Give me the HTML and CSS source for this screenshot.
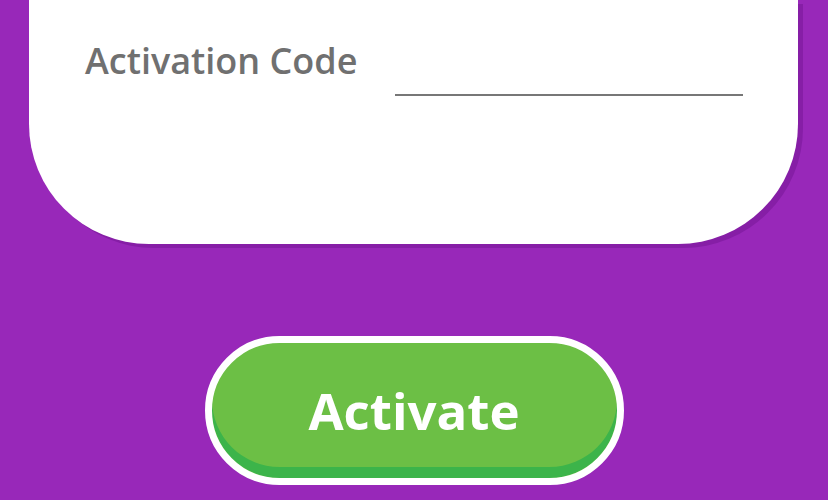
FILE: index.html
```html
<!DOCTYPE html>
<html lang="en">
  <head>
    <meta charset="UTF-8" />
    <meta name="viewport" content="width=device-width, initial-scale=1.0" />
    <title>Activate</title>
    <link rel="stylesheet" href="styles.css">
  </head>
  <body>
    <div class="card">
      <div class="field-row">
        <label for="code" class="field-label">Activation Code</label>
        <input type="text" id="code" class="field-input" />
      </div>
    </div>

    <div class="actions">
      <button class="activate-btn">Activate</button>
    </div>
  </body>
</html>
```

FILE: styles.css
```css
body {
  margin: 0;
  padding: 0;
  background-color: #9828b9;
  font-family: "Open Sans", Arial, sans-serif;
  height: 500px;
  overflow: hidden;
}

/* White card */
.card {
  margin-left: 29px;
  width: 769px;
  height: 244px;
  background: #fff;
  border-radius: 0 0 120px 120px;
  box-shadow: 5px 4px 0 rgba(80, 0, 110, 0.25);
  box-sizing: border-box;
  padding: 37px 0 0 56px;
}

.field-row {
  display: flex;
  align-items: flex-start;
}

.field-label {
  font-size: 36px;
  font-weight: 600;
  color: #707070;
  line-height: 48px;
  width: 310px;
}

.field-input {
  margin-top: 21px;
  width: 348px;
  height: 36px;
  border: none;
  border-bottom: 2px solid #777;
  outline: none;
  background: transparent;
  font-size: 28px;
  font-family: inherit;
  padding: 0;
}

/* Button */
.actions {
  display: flex;
  justify-content: center;
  margin-top: 92px;
}

.activate-btn {
  width: 419px;
  height: 149px;
  border: 7px solid #fff;
  border-radius: 75px;
  background-color: #6cbf45;
  box-shadow: inset 0 -11px 0 #3cb44a;
  color: #fff;
  font-family: inherit;
  font-size: 51px;
  font-weight: 700;
  padding: 0 0 2px;
  cursor: pointer;
}
```
